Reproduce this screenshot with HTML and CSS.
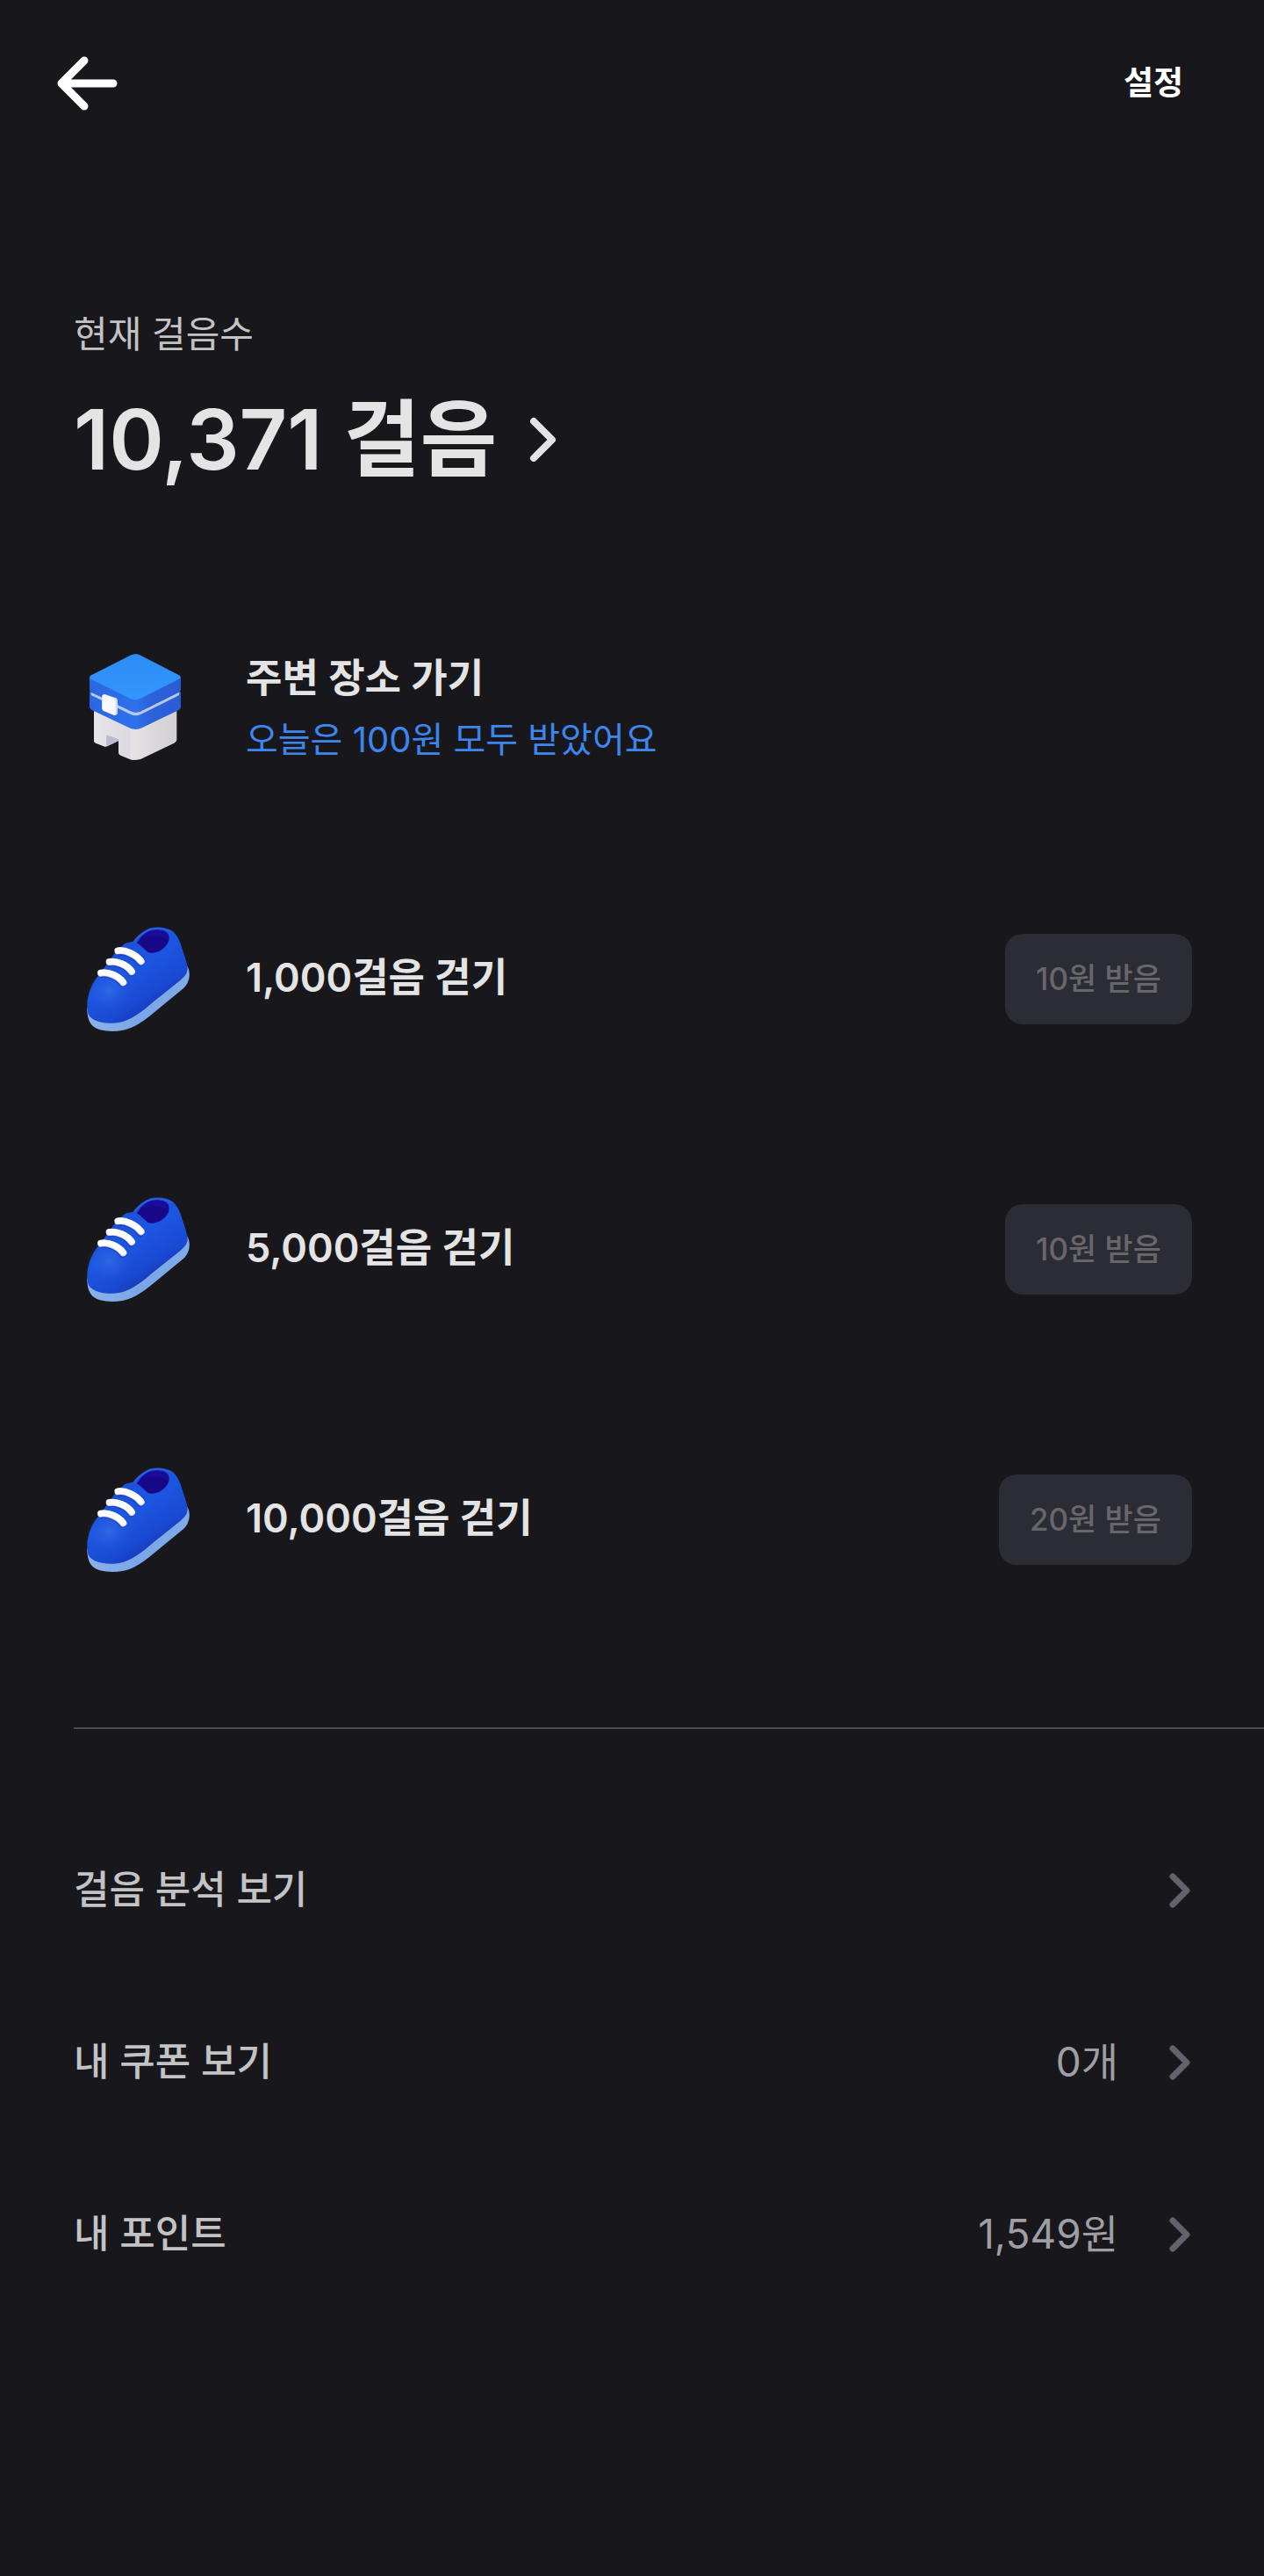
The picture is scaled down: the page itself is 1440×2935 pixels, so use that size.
FILE: index.html
```
<!DOCTYPE html>
<html lang="ko">
<head>
    <meta charset="UTF-8">
    <meta name="viewport" content="width=device-width, initial-scale=1.0">
    <title>만보기</title>
    <link rel="stylesheet" href="styles.css">
</head>
<body>

    <!-- shared shapes -->
    <svg class="defs" width="0" height="0" aria-hidden="true">
        <defs>
            <linearGradient id="shoe-body" x1="0.2" y1="0.1" x2="0.75" y2="0.9">
                <stop offset="0" stop-color="#1c4fd6"/>
                <stop offset="0.45" stop-color="#1c56e0"/>
                <stop offset="0.75" stop-color="#1a49d2"/>
                <stop offset="1" stop-color="#1530a8"/>
            </linearGradient>
            <radialGradient id="shoe-shine" cx="0.5" cy="0.5" r="0.5">
                <stop offset="0" stop-color="#3f76ea" stop-opacity="0.55"/>
                <stop offset="1" stop-color="#2a60e6" stop-opacity="0"/>
            </radialGradient>
            <linearGradient id="shoe-sole" x1="0" y1="0" x2="1" y2="0">
                <stop offset="0" stop-color="#8db2ea"/>
                <stop offset="0.5" stop-color="#7ba6e6"/>
                <stop offset="1" stop-color="#7fabe8"/>
            </linearGradient>
            <symbol id="shoe" viewBox="12 9 432 432">
                <path fill="url(#shoe-sole)" d="M58 325C57 350 63 375 78 388C96 404 140 408 178 402C220 394 250 371 285 342L388 257C402 244 409 224 407 204C406 192 402 183 397 180L200 330Z"/>
                <path fill="url(#shoe-body)" d="M59 335C53 288 72 245 97 214L124 178L152 138L184 107C196 99 207 101 215 98C230 80 249 60 275 52C298 46 335 50 351 64C371 83 378 108 385 130C392 153 400 172 401 190C401 208 390 219 377 230L285 304C248 335 218 361 180 372C142 382 96 378 72 359C63 352 60 344 59 335Z"/>
                <ellipse fill="url(#shoe-shine)" cx="134" cy="268" rx="76" ry="70"/>
                <path fill="none" stroke="#2f66e6" stroke-width="5" stroke-linecap="round" stroke-opacity="0.7" d="M219 98C236 77 254 62 277 56C304 50 332 55 344 67"/>
                <path fill="#1a0c97" d="M227 103C239 84 255 66 277 60C303 54 329 60 336 75C342 92 334 110 317 123C300 136 281 139 268 136C257 131 246 114 227 103Z"/>
                <path fill="#14077d" d="M240 88C260 77 303 76 335 92C330 110 316 124 300 131C284 138 272 137 266 133C256 122 246 108 232 103Z" opacity="0.6"/>
                <g fill="none" stroke="#16379f" stroke-opacity="0.5" stroke-width="22" stroke-linecap="round">
                    <path d="M166 136C190 131 225 148 239 173"/>
                    <path d="M136 173C160 168 195 184 208 207"/>
                    <path d="M107 211C131 206 164 221 178 244"/>
                </g>
                <g fill="none" stroke="#dfdfec" stroke-width="24" stroke-linecap="round">
                    <path d="M163 130C188 126 224 142 242 166"/>
                    <path d="M134 168C158 163 194 178 210 201"/>
                    <path d="M105 206C129 201 164 215 181 238"/>
                </g>
                <g fill="none" stroke="#fdfdff" stroke-width="20" stroke-linecap="round">
                    <path d="M163 129C188 125 224 141 242 164"/>
                    <path d="M134 167C158 162 194 177 210 199"/>
                    <path d="M105 205C129 200 164 214 181 236"/>
                </g>
            </symbol>

            <linearGradient id="wall-left" x1="0" y1="0" x2="1" y2="0">
                <stop offset="0" stop-color="#e6e5e9"/>
                <stop offset="1" stop-color="#dad8de"/>
            </linearGradient>
            <linearGradient id="wall-right" x1="0" y1="0" x2="1" y2="0">
                <stop offset="0" stop-color="#e5e3e4"/>
                <stop offset="1" stop-color="#d2cfd3"/>
            </linearGradient>
            <linearGradient id="roof-top" x1="0" y1="0" x2="0" y2="1">
                <stop offset="0" stop-color="#2c8df6"/>
                <stop offset="1" stop-color="#3396fb"/>
            </linearGradient>
            <linearGradient id="roof-side" x1="0" y1="0" x2="1" y2="0">
                <stop offset="0" stop-color="#2a66df"/>
                <stop offset="0.5" stop-color="#2f71ec"/>
                <stop offset="0.65" stop-color="#2c63da"/>
                <stop offset="1" stop-color="#2a5bd4"/>
            </linearGradient>
            <symbol id="store" viewBox="12 45 432 432">
                <path fill="url(#wall-left)" d="M81 250V371C81 375 83 378 87 380L120 393L165 365V413C166 418 169 420 174 423L203 435C210 438 220 438 226 437V300Z"/>
                <path fill="url(#wall-right)" d="M205 300V435C217 439 232 438 242 434L355 380C361 377 364 373 364 367V245Z"/>
                <path fill="#bdb9d0" d="M123 359C123 354 127 352 131 354L165 367V374L124 393Z"/>
                <path fill="#18171c" d="M124 393L165 373V413L140 402Z"/>
                <path fill="url(#roof-side)" d="M66 205V256C66 261 69 264 74 267L202 328C216 335 232 334 245 328L371 267C376 264 378 261 378 255V205L225 270Z"/>
                <path fill="#b6c8f4" d="M71 200V212C71 216 74 218 79 220L207 282C219 287 230 287 241 282L367 219C371 217 373 214 373 210V200L225 262Z"/>
                <path fill="url(#roof-side)" d="M66 155V198C66 203 69 206 74 208L205 270C217 277 232 277 243 271L371 207C376 204 378 201 378 196V155Z"/>
                <path fill="url(#roof-top)" d="M72 148L205 80C216 74 230 74 241 80L370 147C379 152 379 157 370 162L244 226C231 233 217 233 204 227L73 163C64 158 64 153 72 148Z"/>
                <path fill="#d3daf2" d="M109 220L118 213L155 225C160 227 162 230 162 235V274C162 282 158 286 151 285L117 271C111 268 109 265 109 260Z"/>
                <path fill="#f7f8fd" d="M109 222C109 215 113 212 120 215L147 226C153 229 155 232 155 238V276C155 283 152 286 145 283L117 271C111 268 109 265 109 260Z"/>
            </symbol>

            <symbol id="chevron" viewBox="0 0 24 40">
                <path fill="none" stroke="currentColor" stroke-width="7" stroke-linecap="round" stroke-linejoin="round" d="M4 4L20 20L4 36"/>
            </symbol>
        </defs>
    </svg>

    <header class="top-bar">
        <button class="back" aria-label="뒤로">
            <svg width="70" height="64" viewBox="0 0 70 64">
                <path fill="none" stroke="currentColor" stroke-width="9" stroke-linecap="round" stroke-linejoin="round" d="M32 6L6 32L32 58M6 32H65"/>
            </svg>
        </button>
        <button class="settings">설정</button>
    </header>

    <main>
        <section class="summary">
            <p class="summary-label">현재 걸음수</p>
            <a class="summary-count" href="#">
                10,371 걸음
                <svg width="32" height="54" viewBox="0 0 32 54">
                    <path fill="none" stroke="currentColor" stroke-width="8" stroke-linecap="round" stroke-linejoin="round" d="M5 6L26 27L5 48"/>
                </svg>
            </a>
        </section>

        <ul class="missions">
            <li class="mission">
                <svg class="mission-icon" aria-hidden="true"><use href="#store"/></svg>
                <div class="mission-text">
                    <h2>주변 장소 가기</h2>
                    <p>오늘은 100원 모두 받았어요</p>
                </div>
            </li>
            <li class="mission">
                <svg class="mission-icon" aria-hidden="true"><use href="#shoe"/></svg>
                <div class="mission-text">
                    <h2>1,000걸음 걷기</h2>
                </div>
                <button class="reward" disabled>10원 받음</button>
            </li>
            <li class="mission">
                <svg class="mission-icon" aria-hidden="true"><use href="#shoe"/></svg>
                <div class="mission-text">
                    <h2>5,000걸음 걷기</h2>
                </div>
                <button class="reward" disabled>10원 받음</button>
            </li>
            <li class="mission">
                <svg class="mission-icon" aria-hidden="true"><use href="#shoe"/></svg>
                <div class="mission-text">
                    <h2>10,000걸음 걷기</h2>
                </div>
                <button class="reward" disabled>20원 받음</button>
            </li>
        </ul>

        <nav class="menu">
            <a class="menu-item" href="#">
                <span class="menu-name">걸음 분석 보기</span>
                <svg class="menu-arrow"><use href="#chevron"/></svg>
            </a>
            <a class="menu-item" href="#">
                <span class="menu-name">내 쿠폰 보기</span>
                <span class="menu-value">0개</span>
                <svg class="menu-arrow"><use href="#chevron"/></svg>
            </a>
            <a class="menu-item" href="#">
                <span class="menu-name">내 포인트</span>
                <span class="menu-value">1,549원</span>
                <svg class="menu-arrow"><use href="#chevron"/></svg>
            </a>
        </nav>
    </main>

</body>
</html>
```
FILE: styles.css
```
* {
    box-sizing: border-box;
}
body {
    margin: 0;
    min-height: 100vh;
    background-color: #18171c;
    color: #e4e4e5;
    font-family: Inter, "Noto Sans CJK KR", sans-serif;
}
h2, p, ul {
    margin: 0;
    padding: 0;
}
button {
    border: none;
    background: none;
    color: inherit;
    font-family: inherit;
    cursor: pointer;
}
a {
    color: inherit;
    text-decoration: none;
}
svg {
    display: block;
}
.defs {
    position: absolute;
}
.top-bar {
    display: flex;
    justify-content: space-between;
    align-items: center;
    height: 190px;
    padding: 0 92px 0 64px;
    color: #fff;
}
.back {
    padding: 0;
}
.settings {
    padding: 0 0 6px;
    font-size: 37px;
    font-weight: 600;
}
.summary {
    padding: 161px 84px 0;
}
.summary-label {
    color: #c3c3c6;
    font-size: 42px;
    line-height: 60px;
}
.summary-count {
    display: flex;
    align-items: center;
    gap: 37px;
    width: fit-content;
    margin-top: 20px;
    font-size: 95px;
    font-weight: 600;
    line-height: 140px;
}
.missions {
    display: flex;
    flex-direction: column;
    gap: 164px;
    padding: 164px 82px 165px 84px;
    list-style: none;
}
.mission {
    display: flex;
    align-items: center;
    gap: 52px;
}
.mission-icon {
    flex: none;
    width: 144px;
    height: 144px;
}
.mission-text {
    flex: 1;
}
.mission-text h2 {
    margin-bottom: 3px;
    font-size: 45px;
    font-weight: 600;
    line-height: 68px;
}
.mission-text p {
    color: #3d86ee;
    font-size: 40px;
    line-height: 66px;
}
.reward {
    height: 103px;
    padding: 0 35px 6px;
    border-radius: 20px;
    background-color: #2c2c35;
    color: #66666b;
    font-size: 35px;
    font-weight: 500;
}
.menu {
    margin-left: 84px;
    padding: 86px 84px 0 0;
    border-top: 2px solid #4b4b53;
}
.menu-item {
    display: flex;
    align-items: center;
    height: 196px;
}
.menu-name,
.menu-value {
    padding-bottom: 8px;
}
.menu-name {
    flex: 1;
    color: #c3c3c6;
    font-size: 44px;
    font-weight: 500;
}
.menu-value {
    color: #9e9ea4;
    font-size: 46px;
}
.menu-arrow {
    width: 24px;
    height: 40px;
    margin-left: 58px;
    color: #62626d;
}
```
